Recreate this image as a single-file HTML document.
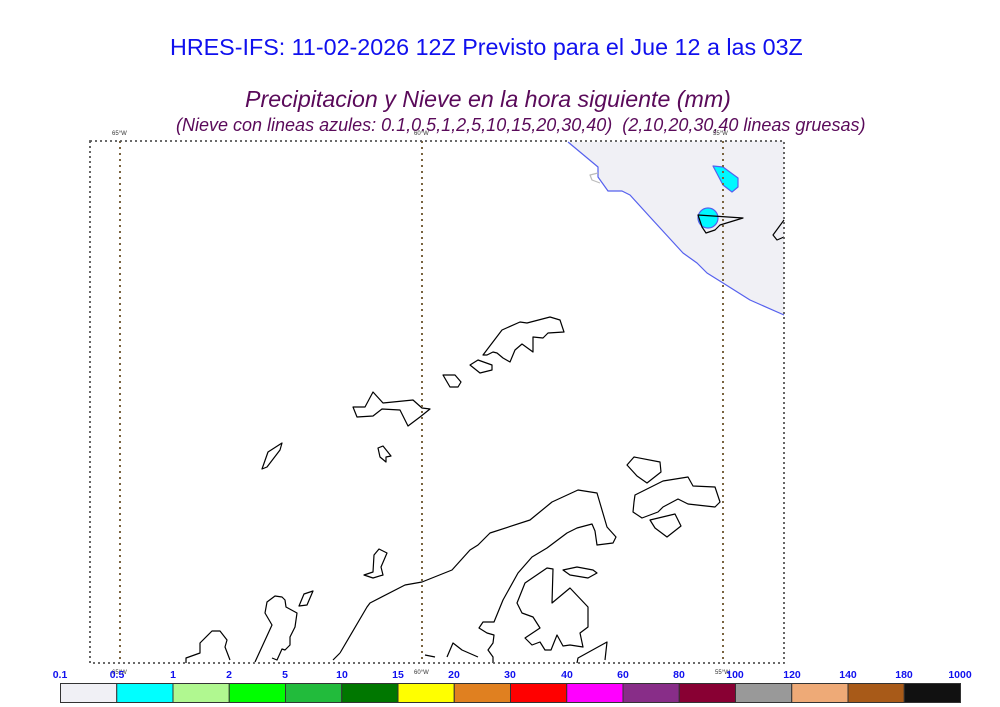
<!DOCTYPE html>
<html><head><meta charset="utf-8"><style>
html,body{margin:0;padding:0;background:#fff;}
body{width:1000px;height:707px;overflow:hidden;position:relative;font-family:"Liberation Sans",sans-serif;}
.t{position:absolute;white-space:nowrap;}
</style></head><body>
<div class="t" style="top:34px;left:170px;font-size:23.3px;color:#1010ee;">HRES-IFS: 11-02-2026 12Z Previsto para el Jue 12 a las 03Z</div>
<div class="t" style="top:86px;left:245px;font-size:23.2px;color:#5a0a5a;font-style:italic;">Precipitacion y Nieve en la hora siguiente (mm)</div>
<div class="t" style="top:115px;left:176px;font-size:18px;color:#5a0a5a;font-style:italic;">(Nieve con lineas azules: 0.1,0.5,1,2,5,10,15,20,30,40)&nbsp; (2,10,20,30,40 lineas gruesas)</div>
<svg width="1000" height="707" style="position:absolute;left:0;top:0" xmlns="http://www.w3.org/2000/svg">
<g fill="none" stroke="#000" stroke-width="1.2" stroke-linejoin="round">
<path d="M568,142 L598,167 L598,177 L608,191 L622,191 L630,195 L650,217 L683,253 L697,263 L707,273 L723,283 L750,300 L784,315 L784,141 Z" fill="#f0f0f5" stroke="none"/>
<path d="M568,142 L598,167 L598,177 L608,191 L622,191 L630,195 L650,217 L683,253 L697,263 L707,273 L723,283 L750,300 L784,315" stroke="#5560ee"/>
<path d="M598,173 L590,175 L592,180 L600,183" stroke="#bbb"/>
<path d="M713,166 L723,167 L738,178 L738,187 L732,192 L723,185 Z" fill="#00f8ff" stroke="#5560ee"/>
<circle cx="708" cy="218" r="10" fill="#00f8ff" stroke="#5560ee"/>
<path d="M698,215 L743,218 L720,225 L715,230 L706,233 L702,227 Z"/>
<path d="M784,220 L773,235 L777,240 L784,237"/>
<path d="M340,653 L367,607 L370,603 L405,585 L422,582 L452,570 L470,550 L478,545 L490,533 L530,520 L552,502 L578,490 L597,493 L607,527 L616,537 L613,543 L597,545 L595,531 L592,524 L577,528 L567,533 L547,548 L532,557 L518,573 L503,600 L494,622 L483,622 L479,628 L487,633 L494,635 L493,643 L488,650 L493,657 L493,663"/>
<path d="M340,653 L333,660"/>
<path d="M483,355 L502,330 L520,322 L527,323 L550,317 L560,320 L564,332 L548,333 L543,338 L533,337 L533,352 L522,344 L515,350 L510,362 L503,358 L497,353 L493,352 L487,355 Z"/>
<path d="M470,365 L478,360 L492,365 L492,370 L480,373 Z"/>
<path d="M443,375 L455,375 L461,382 L458,387 L450,387 Z"/>
<path d="M353,407 L365,407 L373,392 L383,403 L413,400 L422,408 L430,409 L420,417 L408,426 L400,410 L382,409 L373,416 L357,417 Z"/>
<path d="M378,448 L383,446 L391,456 L386,457 L386,462 L380,457 Z"/>
<path d="M364,575 L373,578 L383,575 L381,567 L387,553 L379,549 L374,555 L373,572 Z"/>
<path d="M627,465 L634,457 L660,462 L661,472 L647,483 L637,476 Z"/>
<path d="M635,495 L663,481 L688,477 L693,486 L715,487 L720,502 L715,507 L688,504 L678,499 L663,507 L658,512 L642,518 L633,512 L634,502 Z"/>
<path d="M650,520 L675,514 L681,526 L667,537 L655,528 Z"/>
<path d="M525,583 L547,568 L553,569 L552,603 L570,588 L588,607 L588,627 L580,633 L583,647 L570,645 L563,646 L557,635 L551,650 L545,650 L540,642 L532,645 L525,638 L540,628 L533,617 L522,613 L517,603 Z"/>
<path d="M563,570 L577,567 L593,570 L597,573 L588,578 L570,575 Z"/>
<path d="M577,663 L578,658 L607,642 L605,660"/>
<path d="M447,657 L453,643 L462,650 L478,657"/>
<path d="M425,655 L435,657"/>
<path d="M262,469 L268,452 L282,443 L280,450 L267,467 Z"/>
<path d="M186,663 L186,658 L200,653 L200,643 L212,631 L220,631 L227,640 L225,647 L230,660"/>
<path d="M255,662 L272,625 L265,613 L267,602 L275,596 L282,597 L285,600 L286,607 L297,613 L295,627 L290,637 L290,645 L285,650 L282,649 L277,660 L272,658"/>
<path d="M299,606 L304,594 L313,591 L307,605 Z"/>
</g>
<g stroke="#7a6440" stroke-width="2" stroke-dasharray="2,4" fill="none">
<line x1="120" y1="141" x2="120" y2="663"/>
<line x1="422" y1="141" x2="422" y2="663"/>
<line x1="723" y1="141" x2="723" y2="663"/>
</g>
<rect x="90" y="141" width="694" height="522" fill="none" stroke="#555" stroke-width="1.8" stroke-dasharray="2,3"/>
<g font-size="6" fill="#333" font-family="Liberation Sans,sans-serif">
<text x="112" y="135">65°W</text><text x="414" y="135">60°W</text><text x="713" y="135">55°W</text>
<text x="112" y="674">65°W</text><text x="414" y="674">60°W</text><text x="715" y="674">55°W</text>
</g>
<g stroke="#333" stroke-width="1">
<rect x="60.5" y="683.5" width="56.25" height="19" fill="#f0f0f5"/>
<rect x="116.75" y="683.5" width="56.25" height="19" fill="#00ffff"/>
<rect x="173" y="683.5" width="56.25" height="19" fill="#b0f890"/>
<rect x="229.25" y="683.5" width="56.25" height="19" fill="#00ff00"/>
<rect x="285.5" y="683.5" width="56.25" height="19" fill="#22bb3c"/>
<rect x="341.75" y="683.5" width="56.25" height="19" fill="#007700"/>
<rect x="398" y="683.5" width="56.25" height="19" fill="#ffff00"/>
<rect x="454.25" y="683.5" width="56.25" height="19" fill="#e08020"/>
<rect x="510.5" y="683.5" width="56.25" height="19" fill="#ff0000"/>
<rect x="566.75" y="683.5" width="56.25" height="19" fill="#ff00ff"/>
<rect x="623" y="683.5" width="56.25" height="19" fill="#882d88"/>
<rect x="679.25" y="683.5" width="56.25" height="19" fill="#880033"/>
<rect x="735.5" y="683.5" width="56.25" height="19" fill="#999999"/>
<rect x="791.75" y="683.5" width="56.25" height="19" fill="#eeaa77"/>
<rect x="848" y="683.5" width="56.25" height="19" fill="#a85a18"/>
<rect x="904.25" y="683.5" width="56.25" height="19" fill="#111111"/>
</g>
<g font-size="10.5" font-weight="bold" fill="#1010ee" text-anchor="middle" font-family="Liberation Sans,sans-serif">
<text x="60" y="678">0.1</text><text x="117" y="678">0.5</text><text x="173" y="678">1</text><text x="229" y="678">2</text>
<text x="285" y="678">5</text><text x="342" y="678">10</text><text x="398" y="678">15</text><text x="454" y="678">20</text>
<text x="510" y="678">30</text><text x="567" y="678">40</text><text x="623" y="678">60</text><text x="679" y="678">80</text>
<text x="735" y="678">100</text><text x="792" y="678">120</text><text x="848" y="678">140</text><text x="904" y="678">180</text><text x="960" y="678">1000</text>
</g>
</svg>
</body></html>
